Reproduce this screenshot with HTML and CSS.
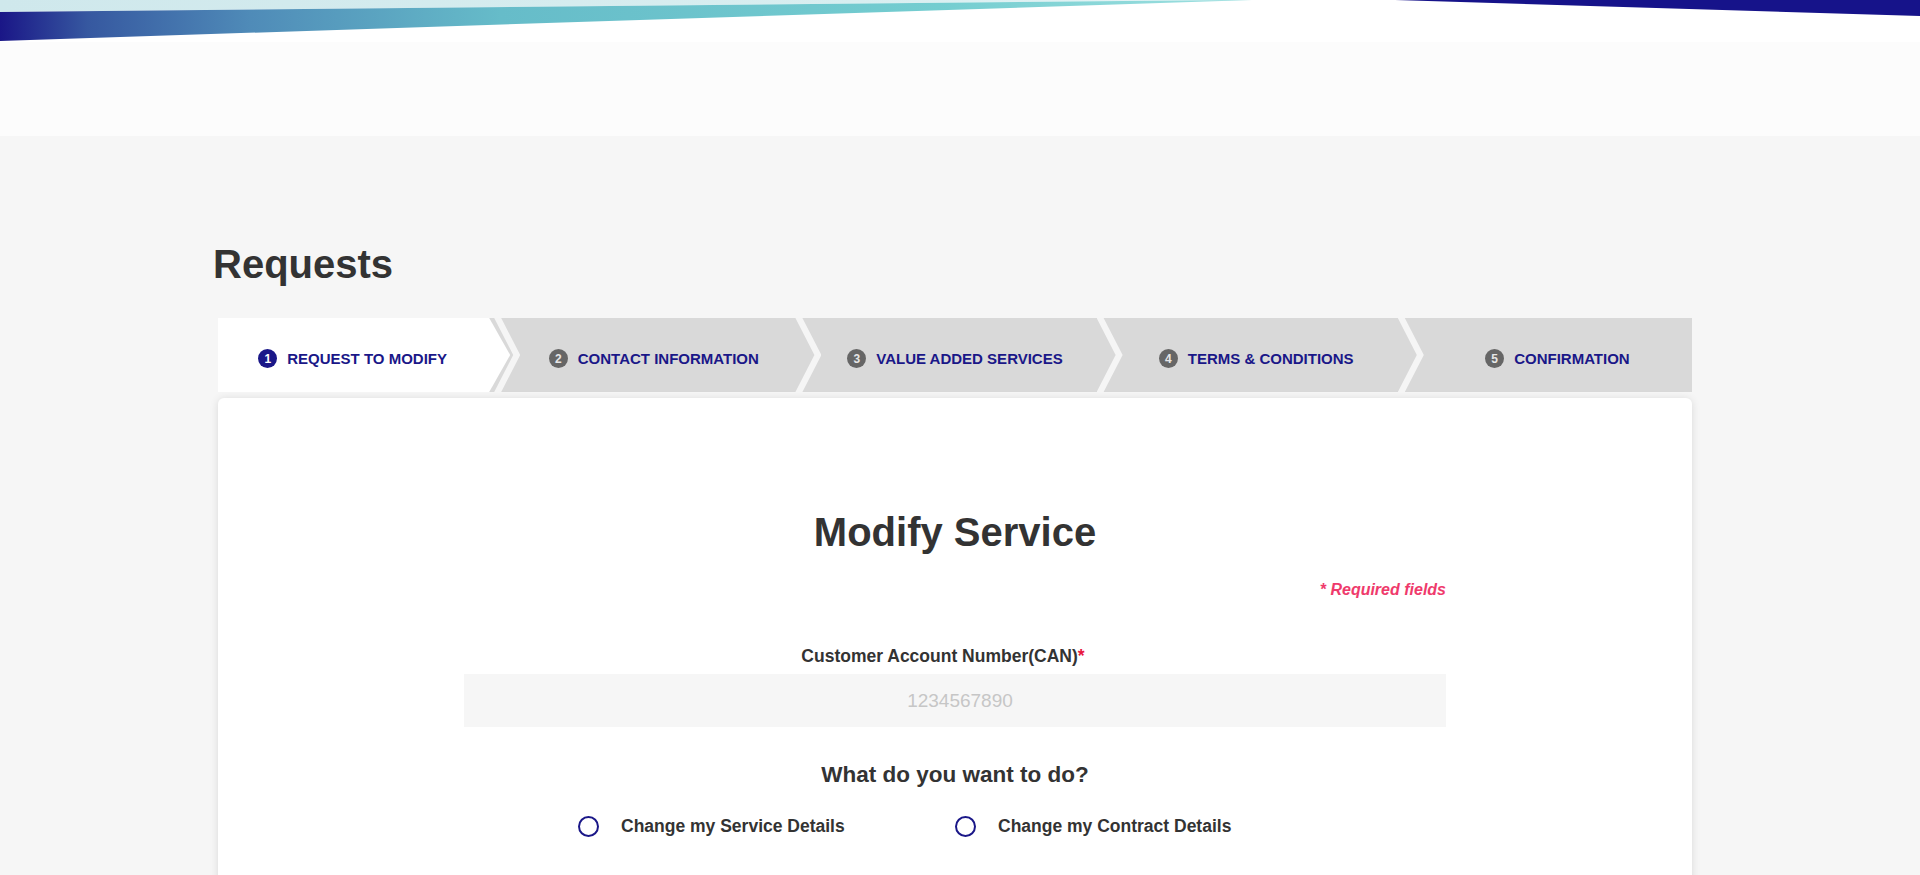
FILE: index.html
```html
<!DOCTYPE html>
<html lang="en">
<head>
<meta charset="utf-8">
<title>Requests - Modify Service</title>
<link rel="stylesheet" href="styles.css">
</head>
<body>
<header class="site-header">
  <svg class="banner" viewBox="0 0 1920 42" preserveAspectRatio="none" aria-hidden="true">
    <defs>
      <linearGradient id="bandGrad" x1="0" y1="0" x2="1" y2="0">
        <stop offset="0" stop-color="#1a1687"/>
        <stop offset="0.07" stop-color="#3658a0"/>
        <stop offset="0.2" stop-color="#4f8bb8"/>
        <stop offset="0.4" stop-color="#66bcc9"/>
        <stop offset="0.75" stop-color="#74cdd0"/>
        <stop offset="1" stop-color="#9fe0e0"/>
      </linearGradient>
      <linearGradient id="lightGrad" x1="0" y1="0" x2="1" y2="0">
        <stop offset="0" stop-color="#cfe8ec"/>
        <stop offset="0.7" stop-color="#d8eef0"/>
        <stop offset="1" stop-color="#e6f5f6"/>
      </linearGradient>
    </defs>
    <rect x="0" y="0" width="1920" height="42" fill="#ffffff"/>
    <polygon points="0,0 1230,0 0,12" fill="url(#lightGrad)"/>
    <polygon points="0,12 1230,0 1252,0 0,41" fill="url(#bandGrad)"/>
    <polygon points="1395,0 1920,0 1920,16" fill="#16138a"/>
  </svg>
  <div class="header-space"></div>
</header>

<main class="page">
  <div class="container">
    <h1 class="page-title">Requests</h1>

    <div class="steps-wrap">
      <ol class="steps">
        <li class="step step-active"><span class="step-num">1</span><span class="step-label">REQUEST TO MODIFY</span></li>
        <li class="step"><span class="step-num">2</span><span class="step-label">CONTACT INFORMATION</span></li>
        <li class="step"><span class="step-num">3</span><span class="step-label">VALUE ADDED SERVICES</span></li>
        <li class="step"><span class="step-num">4</span><span class="step-label">TERMS &amp; CONDITIONS</span></li>
        <li class="step"><span class="step-num">5</span><span class="step-label">CONFIRMATION</span></li>
      </ol>
    </div>

    <section class="card">
      <form class="form">
        <h2 class="form-title">Modify Service</h2>
        <p class="required-note">* Required fields</p>
        <label class="field-label" for="can">Customer Account Number(CAN)<span class="req">*</span></label>
        <input id="can" class="field-input" type="text" placeholder="1234567890">
        <h3 class="question">What do you want to do?</h3>
        <div class="radio-row">
          <label class="radio"><input type="radio" name="mode" class="radio-input"><span class="radio-circle"></span><span class="radio-text">Change my Service Details</span></label>
          <label class="radio"><input type="radio" name="mode" class="radio-input"><span class="radio-circle"></span><span class="radio-text">Change my Contract Details</span></label>
        </div>
      </form>
    </section>
  </div>
</main>
</body>
</html>
```

FILE: styles.css
```css
* {
  box-sizing: border-box;
}

html, body {
  margin: 0;
  padding: 0;
}

body {
  font-family: "Liberation Sans", Arial, sans-serif;
  color: #333333;
  background: #f6f6f6;
}

.site-header {
  background: #fcfcfc;
}

.banner {
  display: block;
  width: 100%;
  height: 42px;
}

.header-space {
  height: 94px;
  background: #fcfcfc;
}

.page {
  padding-top: 104px;
  padding-bottom: 60px;
}

.container {
  width: 1484px;
  padding-right: 10px;
  margin: 0 auto;
}

.page-title {
  margin: 0 0 30px -5px;
  font-size: 40px;
  line-height: 48px;
  font-weight: 700;
  color: #333333;
}

/* Steps */
.steps-wrap {
  height: 74px;
  overflow: hidden;
  background: #d9d9d9;
}

.steps {
  list-style: none;
  margin: 0 -16px;
  padding: 0;
  display: flex;
  height: 74px;
}

.step {
  position: relative;
  flex: 1 1 0;
  display: flex;
  align-items: center;
  justify-content: center;
  gap: 10px;
  padding-top: 7px;
  font-size: 15px;
  font-weight: 700;
  color: #1a1788;
}

.step-active::before {
  content: "";
  position: absolute;
  top: 0;
  bottom: 0;
  left: 0;
  right: -7px;
  background: #ffffff;
  clip-path: polygon(0 0, calc(100% - 21px) 0, 100% 50%, calc(100% - 21px) 100%, 0 100%);
}

.step + .step::before {
  content: "";
  position: absolute;
  top: 0;
  left: -9px;
  width: 26px;
  height: 100%;
  background: #f5f5f5;
  clip-path: polygon(0 0, 7px 0, 26px 50%, 7px 100%, 0 100%, 19px 50%);
}

.step-num {
  position: relative;
  width: 19px;
  height: 19px;
  border-radius: 50%;
  background: #666666;
  color: #e6e6e6;
  font-size: 12px;
  font-weight: 700;
  display: flex;
  align-items: center;
  justify-content: center;
  flex: none;
}

.step-active .step-num {
  background: #1a1788;
  color: #ffffff;
}

.step-label {
  position: relative;
  white-space: nowrap;
}

/* Card */
.card {
  margin-top: 6px;
  background: #ffffff;
  border-radius: 6px;
  box-shadow: 0 1px 8px rgba(0, 0, 0, 0.12);
  padding: 110px 0 0;
  min-height: 2810px;
}

.form {
  width: 982px;
  margin: 0 auto;
  display: flex;
  flex-direction: column;
}

.form-title {
  margin: 0;
  text-align: center;
  font-size: 40px;
  line-height: 48px;
  font-weight: 700;
  color: #333333;
}

.required-note {
  margin: 24px 0 0;
  text-align: right;
  font-size: 16px;
  line-height: 20px;
  font-weight: 700;
  font-style: italic;
  color: #ef3a6c;
}

.field-label {
  margin-top: 45px;
  padding-right: 24px;
  text-align: center;
  font-size: 17.5px;
  line-height: 22px;
  font-weight: 700;
  color: #333333;
}

.req {
  color: #e8173f;
}

.field-input {
  margin-top: 7px;
  height: 53px;
  width: 100%;
  border: none;
  outline: none;
  padding: 0 0 0 10px;
  background: #f6f6f6;
  text-align: center;
  font-family: "Liberation Sans", Arial, sans-serif;
  font-size: 19px;
  color: #333333;
}

.field-input::placeholder {
  color: #c6c6c6;
}

.question {
  margin: 34px 0 0;
  text-align: center;
  font-size: 22.5px;
  line-height: 28px;
  font-weight: 700;
  color: #333333;
}

.radio-row {
  margin-top: 25px;
  display: grid;
  grid-template-columns: 377px 377px;
  justify-content: center;
}

.radio {
  display: flex;
  align-items: center;
  height: 24px;
  font-size: 17.5px;
  font-weight: 700;
  color: #333333;
  cursor: pointer;
}

.radio-input {
  position: absolute;
  opacity: 0;
  width: 0;
  height: 0;
}

.radio-circle {
  width: 21px;
  height: 21px;
  border: 2px solid #1a1788;
  border-radius: 50%;
  flex: none;
  margin-right: 22px;
}
```
